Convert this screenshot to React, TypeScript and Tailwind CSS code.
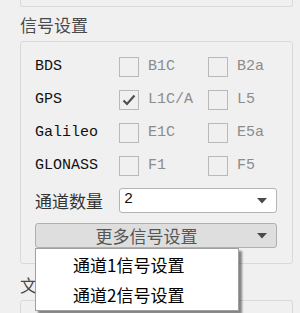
import { ChevronDown } from 'lucide-react';

const cjk = { fontFamily: '"Noto Sans CJK SC", sans-serif' };
const mono = { fontFamily: '"Liberation Mono", "Noto Sans CJK SC", monospace' };

type Row = { name: string; a: string; b: string; checkedA?: boolean };

const rows: Row[] = [
  { name: 'BDS', a: 'B1C', b: 'B2a' },
  { name: 'GPS', a: 'L1C/A', b: 'L5', checkedA: true },
  { name: 'Galileo', a: 'E1C', b: 'E5a' },
  { name: 'GLONASS', a: 'F1', b: 'F5' },
];

function Check({ checked }: { checked?: boolean }) {
  return (
    <div className="w-[20px] h-[20px] border border-[#b9b9b9] bg-[#f0f0f0] flex items-center justify-center shrink-0">
      {checked && (
        <svg width="14" height="12" viewBox="0 0 14 12">
          <path d="M1.5 6.5 L5 10 L12.5 1.5" fill="none" stroke="#505050" strokeWidth="2.2" />
        </svg>
      )}
    </div>
  );
}

function Caret() {
  return (
    <svg width="10" height="6" viewBox="0 0 10 6" className="shrink-0">
      <path d="M0 0 H10 L5 5.5 Z" fill="#4a4a4a" />
    </svg>
  );
}

export default function App() {
  // ChevronDown kept out of the picture: the native combo arrow is a solid caret
  void ChevronDown;
  return (
    <div className="relative w-[300px] h-[313px] overflow-hidden bg-[#f0f0f0]">
      {/* tail of the group above */}
      <div className="ml-[20px] w-[273px] h-[7px] border-x border-b border-[#d9d9d9] rounded-b-[3px]" />

      <div className="ml-[20px] mt-[9px] h-[18px] text-[17px] leading-[18px] text-[#4a4a4a]" style={cjk}>
        信号设置
      </div>

      <div className="ml-[20px] mt-[7px] w-[273px] h-[223px] border border-[#d9d9d9] rounded-[3px] pl-[14px] pr-[15px] pt-[15px]">
        <div className="flex flex-col gap-[13px]">
          {rows.map((r) => (
            <div key={r.name} className="flex items-center h-[20px] text-[15px] leading-[20px]" style={mono}>
              <span className="w-[84px] text-[#111]">{r.name}</span>
              <Check checked={r.checkedA} />
              <span className="ml-[9px] w-[60px] text-[#8c8c8c]">{r.a}</span>
              <Check />
              <span className="ml-[9px] text-[#8c8c8c]">{r.b}</span>
            </div>
          ))}

          <div className="flex items-center h-[25px] -mt-[1px]">
            <span className="w-[84px] text-[17px] text-[#333]" style={cjk}>
              通道数量
            </span>
            <div className="flex-1 h-[25px] bg-white border border-[#b4b4b4] rounded-[3px] flex items-center pl-[4px] pr-[9px]">
              <span className="flex-1 text-[15px] text-[#111]" style={mono}>
                2
              </span>
              <Caret />
            </div>
          </div>

          <div className="-mt-[3px] h-[25px] bg-[#dedede] border border-[#b0b0b0] rounded-[3px] flex items-center pr-[9px]">
            <span className="flex-1 text-center text-[17px] text-[#555]" style={cjk}>
              更多信号设置
            </span>
            <Caret />
          </div>
        </div>
      </div>

      <div className="ml-[20px] mt-[12px] h-[18px] text-[17px] leading-[18px] text-[#4a4a4a]" style={cjk}>
        文件设置
      </div>
      <div className="ml-[20px] mt-[6px] w-[273px] h-[40px] border border-[#d9d9d9] rounded-[3px]" />

      {/* open popup of the button */}
      <div
        className="absolute left-[35px] top-[248px] w-[204px] h-[63px] bg-white border border-[#a0a0a0] shadow-[3px_3px_2px_rgba(0,0,0,0.45)] flex flex-col text-[17px] text-black"
        style={cjk}
      >
        <div className="h-[31px] flex items-center pl-[37px]">通道1信号设置</div>
        <div className="h-[31px] flex items-center pl-[37px]">通道2信号设置</div>
      </div>
    </div>
  );
}
